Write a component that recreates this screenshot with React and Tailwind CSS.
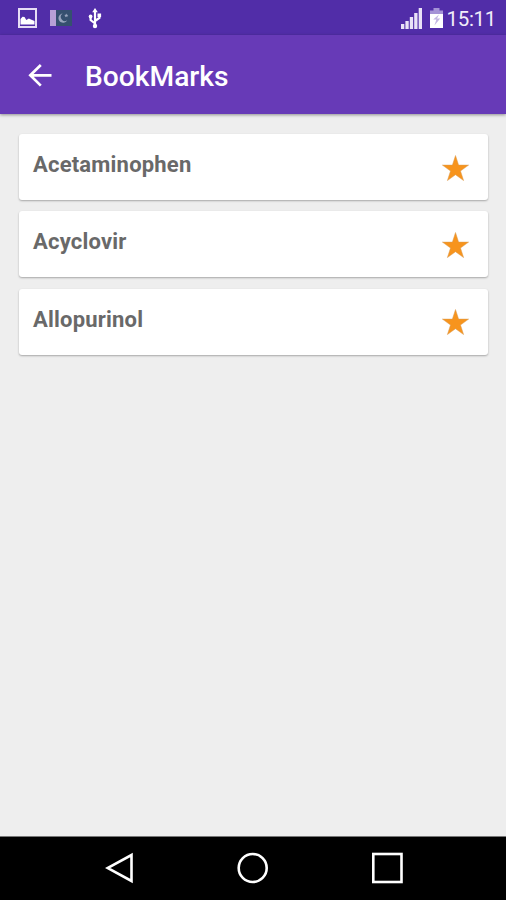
import React from 'react';

const bookmarks = [
  { id: 1, name: 'Acetaminophen' },
  { id: 2, name: 'Acyclovir' },
  { id: 3, name: 'Allopurinol' },
];

function StatusBar() {
  return (
    <div className="h-[35px] shrink-0 bg-[#512da8] flex items-center justify-between pl-[18px] pr-[10px]">
      <div className="flex items-center pt-[1px]">
        {/* Screenshot */}
        <svg width="19" height="20" viewBox="0 0 19 20">
          <rect x="1" y="1" width="17" height="18" fill="none" stroke="#e6ddf5" strokeWidth="2" />
          <path d="M2.5 16.5V11l2-2.2 2 .2 1.8 3 2.6-1.6 2 1.2 3.6 1.4v3.5z" fill="#fff" />
        </svg>
        {/* Flag */}
        <svg className="ml-[13px]" width="22" height="16" viewBox="0 0 22 16">
          <rect width="22" height="16" fill="#35506f" />
          <rect width="6" height="16" fill="#b7a0d6" />
          <path d="M12.6 3.6a4.6 4.6 0 1 0 4.6 6.6 3.9 3.9 0 1 1-4.6-6.6z" fill="#97a4bd" />
          <path d="M16.3 3.4l.6 1.3 1.4.2-1 1 .2 1.4-1.2-.7-1.3.7.3-1.4-1-1 1.4-.2z" fill="#97a4bd" />
        </svg>
        {/* USB */}
        <svg className="ml-[16px]" width="14" height="21" viewBox="0 0 14 21" fill="none" stroke="#fff" strokeWidth="2.2">
          <path d="M7 3v15M7 15.5L2.6 12V8.5M7 13l4.4-3V7" />
          <path d="M7 0l2.8 4.2H4.2z" fill="#fff" stroke="none" />
          <circle cx="2.6" cy="8.5" r="1.9" fill="#fff" stroke="none" />
          <rect x="9.5" y="5.5" width="3.6" height="3.6" fill="#fff" stroke="none" />
          <circle cx="7" cy="18" r="2.2" fill="#fff" stroke="none" />
        </svg>
      </div>

      <div className="flex items-center">
        {/* Signal */}
        <svg className="mt-[1px]" width="21" height="21" viewBox="0 0 21 21" fill="#e9e2f7">
          <rect x="0" y="16" width="3.3" height="5" />
          <rect x="4.4" y="13" width="3.3" height="8" />
          <rect x="8.8" y="9" width="3.3" height="12" />
          <rect x="13.2" y="5" width="3.3" height="16" />
          <rect x="17.7" y="0" width="3.3" height="21" />
        </svg>
        {/* Battery */}
        <svg className="ml-[8px] mt-[1px]" width="13" height="20" viewBox="0 0 13 20">
          <path d="M3.5 0h6v2.5H13V7H0V2.5h3.5z" fill="#a593d6" />
          <path d="M0 6h13v14H0z" fill="#fff" />
          <path d="M9 6.5L3.2 11.6h3.2l-2 5.9 5.8-7H7z" fill="#c3b6e2" />
        </svg>
        <span className="ml-[3px] text-[20.5px] leading-[35px] tracking-[-0.3px] text-[#f1edf9] relative top-[2px]">15:11</span>
      </div>
    </div>
  );
}

function AppBar() {
  return (
    <header className="h-[79px] shrink-0 bg-[#673ab7] flex items-center pl-[28px] shadow-[0_1px_3px_rgba(0,0,0,0.4)] z-10">
      <svg width="24" height="24" viewBox="0 0 24 24" fill="none" stroke="#fff" strokeWidth="2.7">
        <path d="M23.5 12.3H2.5M12.8 2L2.3 12.3l10.5 10.3" />
      </svg>
      <h1 className="ml-[33px] text-[28.2px] leading-[32px] font-medium text-white relative top-[2px]">BookMarks</h1>
    </header>
  );
}

function BookmarkCard({ name }) {
  return (
    <li className="h-[66px] bg-white rounded-[3px] shadow-[0_1px_2px_rgba(0,0,0,0.3)] flex items-center justify-between pl-[14px] pr-[19px]">
      <span className="text-[22px] leading-[26px] font-bold tracking-[0.2px] text-[#696969] pb-[4px]">{name}</span>
      <svg className="mt-[1px]" width="28" height="28" viewBox="0 0 28 28">
        <path d="M14.5 1.5l3.1 9.6h10l-8.1 5.9 3.1 9.6-8.1-5.9-8.1 5.9 3.1-9.6-8.1-5.9h10z" fill="#f7941d" stroke="#d99a52" strokeWidth=".5" />
      </svg>
    </li>
  );
}

function NavBar() {
  return (
    <nav className="h-[64px] shrink-0 bg-black flex items-center justify-between pl-[105px] pr-[102px] pb-[1px] border-t border-[#777]">
      <svg width="29" height="32" viewBox="0 0 29 32" fill="none" stroke="#fff" strokeWidth="2.6">
        <path d="M26.5 3v26L2.5 16z" />
      </svg>
      <svg width="32" height="32" viewBox="0 0 32 32" fill="none" stroke="#fff" strokeWidth="2.6">
        <circle cx="15.7" cy="16" r="14" />
      </svg>
      <svg width="32" height="32" viewBox="0 0 32 32" fill="none" stroke="#fff" strokeWidth="2.6">
        <rect x="1.3" y="2" width="28.2" height="28" />
      </svg>
    </nav>
  );
}

export default function App() {
  return (
    <div className="w-full h-screen flex flex-col overflow-hidden bg-[#eeeeee] font-[Roboto,sans-serif]">
      <StatusBar />
      <AppBar />
      <main className="flex-1 pt-[20px] pl-[19px] pr-[18px]">
        <ul className="flex flex-col gap-[11.4px]">
          {bookmarks.map((item) => (
            <BookmarkCard key={item.id} name={item.name} />
          ))}
        </ul>
      </main>
      <NavBar />
    </div>
  );
}
